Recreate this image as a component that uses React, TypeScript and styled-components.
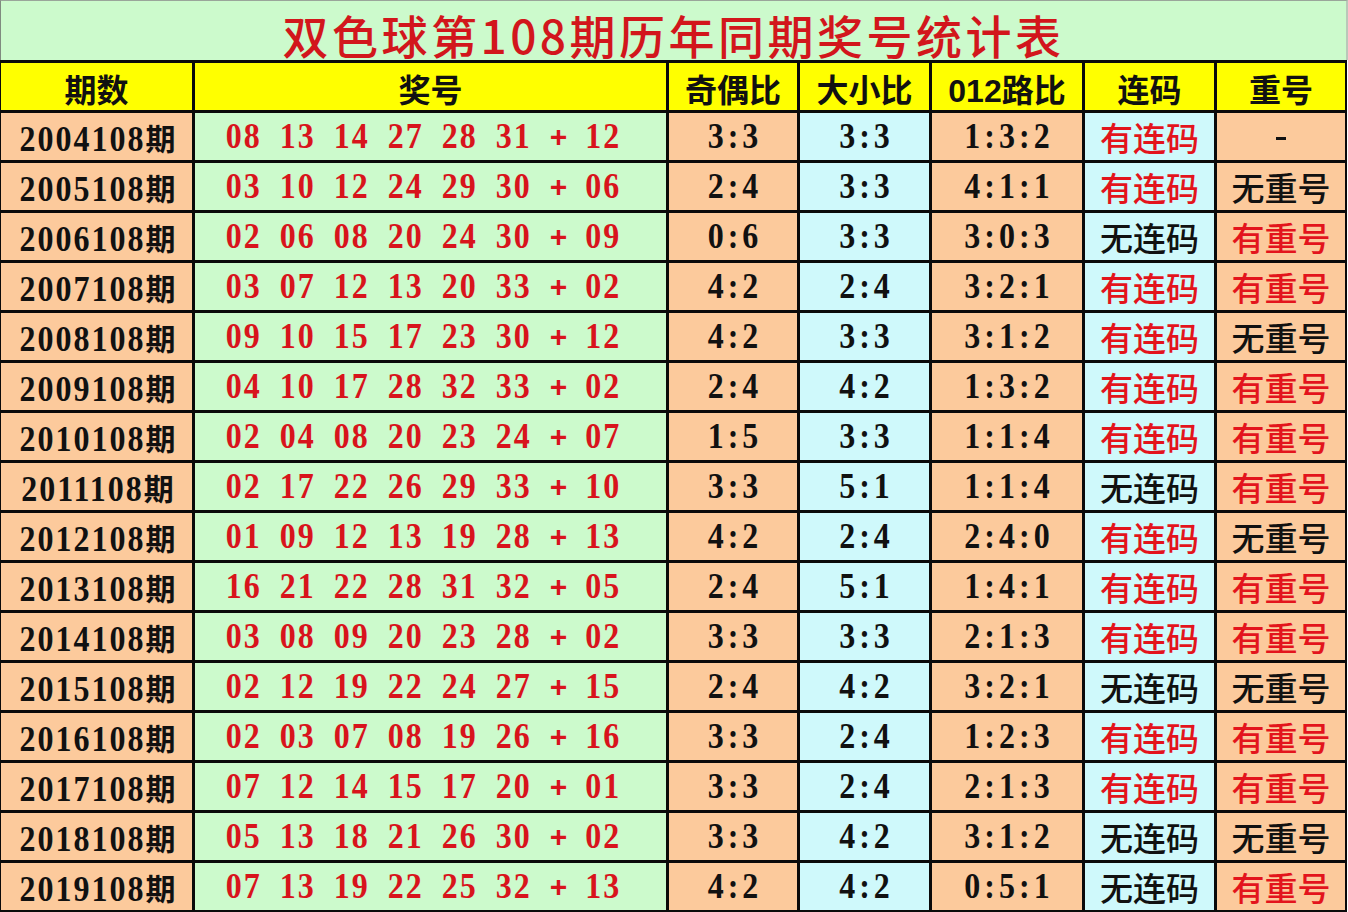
import React from "react";
import styled, { createGlobalStyle } from "styled-components";

const GlobalStyle = createGlobalStyle`
  html, body {
    margin: 0;
    padding: 0;
    background: #ffffff;
  }
`;

const PEACH = "#fcca9c";
const GREEN = "#ccfacc";
const CYAN = "#cff9fb";
const RED = "#d8141c";
const YELLOW = "#ffff00";

const Sheet = styled.div`
  width: 1348px;
  height: 912px;
  overflow: hidden;
  display: flex;
  flex-direction: column;
`;

const TitleBar = styled.div`
  height: 60px;
  box-sizing: border-box;
  background: ${GREEN};
  border-top: 1px solid #9aa59a;
  border-left: 1px solid #7f8a7f;
  border-right: 2px solid #b9c8b9;
  display: flex;
  align-items: center;
  justify-content: center;
  padding-top: 6px;
  color: #d2161c;
  font-family: "Noto Sans CJK SC", "Liberation Serif", serif;
  font-size: 46px;
  font-weight: 500;
  letter-spacing: 3.5px;
  line-height: 1;
`;

const Grid = styled.div`
  display: grid;
  grid-template-columns: 191px 471px 128px 129px 150px 129px 128px;
  grid-auto-rows: 47px;
  gap: 3px;
  padding: 3px 2px 2px 1px;
  background: #0a0a0a;
  width: 1347px;
  box-sizing: border-box;
`;

const Cell = styled.div<{ $bg: string }>`
  background: ${(p) => p.$bg};
  display: flex;
  align-items: center;
  justify-content: center;
  overflow: hidden;
  white-space: nowrap;
`;

const HeadText = styled.span`
  font-family: "Liberation Sans", "Noto Sans CJK SC", sans-serif;
  font-size: 32px;
  font-weight: 700;
  color: #111;
  padding-top: 2px;
`;

const HeadCjk = styled.span`
  font-family: "Noto Sans CJK SC", sans-serif;
  font-weight: 700;
`;

const Period = styled.span`
  display: inline-block;
  font-family: "Liberation Serif", "Noto Sans CJK SC", serif;
  font-size: 32px;
  font-weight: 700;
  letter-spacing: 2px;
  color: #111;
  padding-left: 2px;
`;

const Digits = styled.span`
  display: inline-block;
  transform: scaleY(1.12);
`;

const PeriodCjk = styled.span`
  font-family: "Noto Sans CJK SC", sans-serif;
  font-size: 30px;
  font-weight: 700;
  letter-spacing: 0;
`;

const Balls = styled.div`
  display: flex;
  align-items: center;
  gap: 18px;
  padding-right: 14px;
`;

const Ball = styled.span`
  display: inline-block;
  transform: scaleY(1.12);
  font-family: "Liberation Serif", serif;
  font-size: 32px;
  font-weight: 700;
  letter-spacing: 2px;
  color: ${RED};
`;

const Plus = styled.span`
  font-family: "Liberation Sans", sans-serif;
  font-size: 30px;
  font-weight: 700;
  color: ${RED};
`;

const Ratio = styled.span`
  display: inline-block;
  transform: scaleY(1.12);
  font-family: "Liberation Serif", serif;
  font-size: 32px;
  font-weight: 700;
  letter-spacing: 4px;
  padding-left: 4px;
  color: #111;
`;

const Flag = styled.span<{ $on: boolean }>`
  font-family: "Noto Sans CJK SC", sans-serif;
  font-size: 33px;
  font-weight: 500;
  color: ${(p) => (p.$on ? "#e3141c" : "#111")};
`;

const Dash = styled.span`
  display: block;
  width: 10px;
  height: 3px;
  margin-top: 4px;
  background: #111;
`;

type Row = [string, string, string, string, string, string, string];

const rows: Row[] = [
  ["2004", "08 13 14 27 28 31 12", "3:3", "3:3", "1:3:2", "有连码", "-"],
  ["2005", "03 10 12 24 29 30 06", "2:4", "3:3", "4:1:1", "有连码", "无重号"],
  ["2006", "02 06 08 20 24 30 09", "0:6", "3:3", "3:0:3", "无连码", "有重号"],
  ["2007", "03 07 12 13 20 33 02", "4:2", "2:4", "3:2:1", "有连码", "有重号"],
  ["2008", "09 10 15 17 23 30 12", "4:2", "3:3", "3:1:2", "有连码", "无重号"],
  ["2009", "04 10 17 28 32 33 02", "2:4", "4:2", "1:3:2", "有连码", "有重号"],
  ["2010", "02 04 08 20 23 24 07", "1:5", "3:3", "1:1:4", "有连码", "有重号"],
  ["2011", "02 17 22 26 29 33 10", "3:3", "5:1", "1:1:4", "无连码", "有重号"],
  ["2012", "01 09 12 13 19 28 13", "4:2", "2:4", "2:4:0", "有连码", "无重号"],
  ["2013", "16 21 22 28 31 32 05", "2:4", "5:1", "1:4:1", "有连码", "有重号"],
  ["2014", "03 08 09 20 23 28 02", "3:3", "3:3", "2:1:3", "有连码", "有重号"],
  ["2015", "02 12 19 22 24 27 15", "2:4", "4:2", "3:2:1", "无连码", "无重号"],
  ["2016", "02 03 07 08 19 26 16", "3:3", "2:4", "1:2:3", "有连码", "有重号"],
  ["2017", "07 12 14 15 17 20 01", "3:3", "2:4", "2:1:3", "有连码", "有重号"],
  ["2018", "05 13 18 21 26 30 02", "3:3", "4:2", "3:1:2", "无连码", "无重号"],
  ["2019", "07 13 19 22 25 32 13", "4:2", "4:2", "0:5:1", "无连码", "有重号"],
];

const heads = ["期数", "奖号", "奇偶比", "大小比", "012路比", "连码", "重号"];

const App: React.FC = () => {
  return (
    <Sheet>
      <GlobalStyle />
      <TitleBar>双色球第108期历年同期奖号统计表</TitleBar>
      <Grid>
        {heads.map((h) => (
          <Cell key={h} $bg={YELLOW}>
            {h.startsWith("012") ? (
              <HeadText>012<HeadCjk>路比</HeadCjk></HeadText>
            ) : (
              <HeadText><HeadCjk>{h}</HeadCjk></HeadText>
            )}
          </Cell>
        ))}

        {rows.map(([year, nums, oe, bs, road, lian, chong]) => {
          const balls = nums.split(" ");
          const reds = balls.slice(0, 6);
          const blue = balls[6];
          return (
            <React.Fragment key={year}>
              <Cell $bg={PEACH}>
                <Period><Digits>{year}108</Digits><PeriodCjk>期</PeriodCjk></Period>
              </Cell>
              <Cell $bg={GREEN}>
                <Balls>
                  {reds.map((n, i) => (
                    <Ball key={i}>{n}</Ball>
                  ))}
                  <Plus>+</Plus>
                  <Ball>{blue}</Ball>
                </Balls>
              </Cell>
              <Cell $bg={PEACH}><Ratio>{oe}</Ratio></Cell>
              <Cell $bg={CYAN}><Ratio>{bs}</Ratio></Cell>
              <Cell $bg={PEACH}><Ratio>{road}</Ratio></Cell>
              <Cell $bg={CYAN}><Flag $on={lian.startsWith("有")}>{lian}</Flag></Cell>
              <Cell $bg={PEACH}>
                {chong === "-" ? <Dash /> : <Flag $on={chong.startsWith("有")}>{chong}</Flag>}
              </Cell>
            </React.Fragment>
          );
        })}
      </Grid>
    </Sheet>
  );
};

export default App;
